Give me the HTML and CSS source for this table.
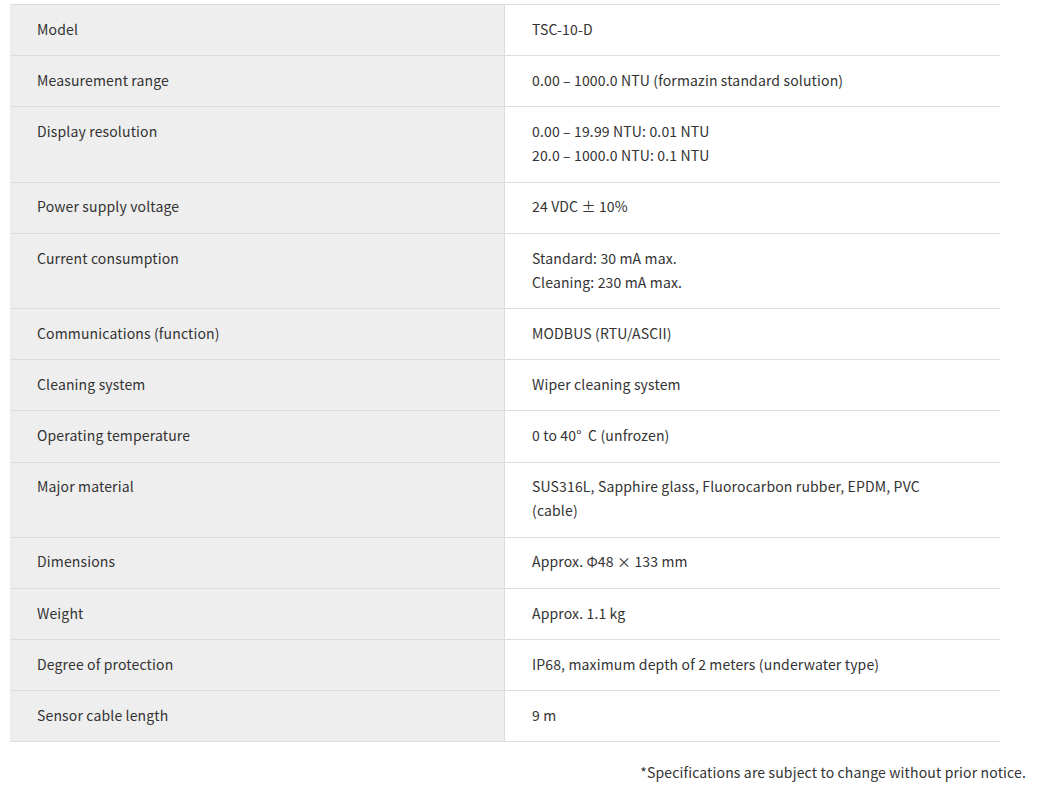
FILE: index.html
```html
<!DOCTYPE html>
<html>
<head>
<meta charset="utf-8">
<link rel="stylesheet" href="styles.css">
</head>
<body>
<div class="wrap">
  <table class="spec">
    <tbody>
      <tr><th>Model</th><td>TSC-10-D</td></tr>
      <tr><th>Measurement range</th><td>0.00 – 1000.0 NTU (formazin standard solution)</td></tr>
      <tr><th>Display resolution</th><td>0.00 – 19.99 NTU: 0.01 NTU<br>20.0 – 1000.0 NTU: 0.1 NTU</td></tr>
      <tr><th>Power supply voltage</th><td>24 VDC ± 10%</td></tr>
      <tr><th>Current consumption</th><td>Standard: 30 mA max.<br>Cleaning: 230 mA max.</td></tr>
      <tr><th>Communications (function)</th><td>MODBUS (RTU/ASCII)</td></tr>
      <tr><th>Cleaning system</th><td>Wiper cleaning system</td></tr>
      <tr><th>Operating temperature</th><td>0 to 40°&nbsp;&nbsp;C (unfrozen)</td></tr>
      <tr><th>Major material</th><td>SUS316L, Sapphire glass, Fluorocarbon rubber, EPDM, PVC<br>(cable)</td></tr>
      <tr><th>Dimensions</th><td>Approx. Φ48 × 133 mm</td></tr>
      <tr><th>Weight</th><td>Approx. 1.1 kg</td></tr>
      <tr><th>Degree of protection</th><td>IP68, maximum depth of 2 meters (underwater type)</td></tr>
      <tr><th>Sensor cable length</th><td>9 m</td></tr>
    </tbody>
  </table>
  <p class="note">*Specifications are subject to change without prior notice.</p>
</div>
</body>
</html>
```
FILE: styles.css
```css
html, body {
  margin: 0;
  padding: 0;
  background: #fff;
}
body {
  font-family: "Noto Sans CJK JP", "Noto Sans", sans-serif;
  font-size: 14px;
  letter-spacing: 0.15px;
  color: #333;
}
.wrap {
  padding: 4px 15px 0 10px;
}
.spec {
  width: 990px;
  border-collapse: collapse;
  border-top: 1px solid #ddd;
}
.spec th,
.spec td {
  text-align: left;
  vertical-align: top;
  font-weight: normal;
  line-height: 24px;
  padding: 11.8px 27px 14.4px 27px;
  border-bottom: 1px solid #ddd;
}
.spec th {
  width: 440px;
  background: #eee;
  border-right: 1px solid #ddd;
}
.spec td {
  padding-left: 27px;
}
.note {
  margin: 18px 0 0;
  text-align: right;
  line-height: 24px;
}
```
